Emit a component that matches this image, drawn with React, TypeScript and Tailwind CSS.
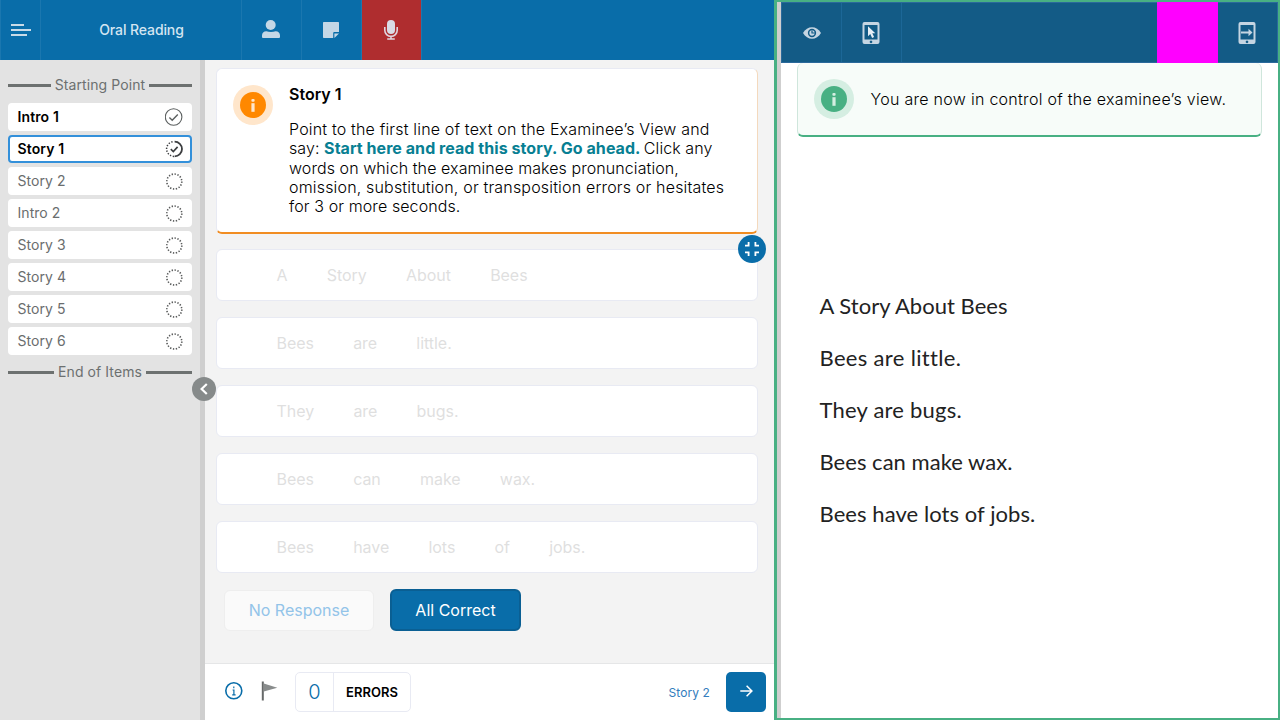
import React from "react";

const items = [
  { label: "Intro 1", state: "done" },
  { label: "Story 1", state: "active" },
  { label: "Story 2", state: "todo" },
  { label: "Intro 2", state: "todo" },
  { label: "Story 3", state: "todo" },
  { label: "Story 4", state: "todo" },
  { label: "Story 5", state: "todo" },
  { label: "Story 6", state: "todo" },
];

const rows = [
  ["A", "Story", "About", "Bees"],
  ["Bees", "are", "little."],
  ["They", "are", "bugs."],
  ["Bees", "can", "make", "wax."],
  ["Bees", "have", "lots", "of", "jobs."],
];

const story = [
  { text: "A Story About Bees", spacing: "tracking-[0.03px]" },
  { text: "Bees are little.", spacing: "tracking-[0.33px]" },
  { text: "They are bugs.", spacing: "tracking-[0.22px]" },
  { text: "Bees can make wax.", spacing: "tracking-[0.03px]" },
  { text: "Bees have lots of jobs.", spacing: "tracking-[0.07px]" },
];

function StateIcon({ state }: { state: string }) {
  if (state === "done") {
    return (
      <svg width="18" height="18" viewBox="0 0 18 18" fill="none" stroke="#5c6060">
        <circle cx="8.6" cy="9" r="8.3" strokeWidth="1.1" />
        <path d="M4.4 9.6 7.2 12.2 12.8 6.4" strokeWidth="1.4" />
      </svg>
    );
  }
  if (state === "active") {
    return (
      <svg width="18" height="18" viewBox="0 0 18 18" fill="none" stroke="#3c3e40">
        <path d="M9 16.4A7.4 7.4 0 0 1 9 1.6" strokeWidth="1.5" strokeDasharray="1.3 1.6" />
        <path d="M9.6 1.6A7.4 7.4 0 0 1 9.6 16.4" strokeWidth="1.8" />
        <path d="M5.8 9.2 8.3 11.6 12.6 6.9" strokeWidth="1.6" />
      </svg>
    );
  }
  return (
    <svg width="18" height="18" viewBox="0 0 18 18" fill="none" stroke="#5a5c5c">
      <circle cx="9.3" cy="9.5" r="7.5" strokeWidth="1.6" strokeDasharray="1.35 1.595" />
    </svg>
  );
}

function Info({ outer, inner, dot }: { outer: string; inner: string; dot: string }) {
  return (
    <svg className="shrink-0" width="40" height="40" viewBox="0 0 40 40">
      <circle cx="20" cy="20" r="20" fill={outer} />
      <circle cx="20" cy="20" r="13" fill={inner} />
      <rect x="18.4" y="14" width="3.2" height="2.8" rx="1" fill={dot} />
      <rect x="18.4" y="18.2" width="3.2" height="8.6" fill={dot} />
    </svg>
  );
}

function Rule({ text }: { text: string }) {
  return (
    <div className="flex h-5 items-center gap-1 text-[14px] tracking-[0.08px] text-[#6c7070]">
      <span className="h-[3px] flex-1 bg-[#6d7170]" />
      <span className="leading-5">{text}</span>
      <span className="h-[3px] flex-1 bg-[#6d7170]" />
    </div>
  );
}

function Tablet({ children }: { children: React.ReactNode }) {
  return (
    <svg width="18" height="22" viewBox="0 0 18 22">
      <path
        fill="#c5d5e2"
        fillRule="evenodd"
        d="M2.5 0h13A2 2 0 0 1 17.5 2v18a2 2 0 0 1-2 2h-13a2 2 0 0 1-2-2V2a2 2 0 0 1 2-2ZM2.5 3v14.4h13V3ZM9 18.6a1.3 1.3 0 1 0 .01 0Z"
      />
      {children}
    </svg>
  );
}

export default function App() {
  return (
    <div className="flex h-[720px] w-[1280px] overflow-hidden bg-[#f3f3f3] font-['Inter',sans-serif]">
      <div className="flex w-[774px] shrink-0 flex-col">
        <header className="flex h-[60px] shrink-0 bg-[#096da9]">
          <div className="flex w-[41px] items-center border-x border-[#1a77af] pl-[10px]">
            <svg width="20" height="12" viewBox="0 0 20 12" stroke="#c8dbe8" strokeWidth="1.8">
              <path d="M0 1h13M0 6h20M0 11h16" />
            </svg>
          </div>
          <div className="flex w-[201px] items-center justify-center border-r border-[#1a77af] text-[14px] font-medium tracking-[-0.1px] text-[#d4e5f1]">
            <span className="-mt-px pl-px">Oral Reading</span>
          </div>
          <div className="flex w-[60px] items-center justify-center border-r border-[#1a77af] pr-[2px]">
            <svg className="-mt-[2px]" width="18" height="18" viewBox="0 0 18 18" fill="#c4d7e6">
              <circle cx="8.7" cy="5" r="5" />
              <path d="M0 17v-1.5C0 12.8 1.6 11.2 4.4 11.2 7 12.3 11 12.3 13.6 11.2 16.4 11.2 18 12.8 18 15.5V17q0 1-1 1H1q-1 0-1-1Z" />
            </svg>
          </div>
          <div className="flex w-[60px] items-center justify-center border-r border-[#1a77af] pr-[2px]">
            <svg width="16" height="16" viewBox="0 0 16 16" fill="#c4d7e6">
              <path d="M.7 0h14.6q.7 0 .7.7V10h-4.8q-1 0-1 1v5H.7q-.7 0-.7-.7V.7Q0 0 .7 0Z" />
              <path d="M11.4 11.4H16L11.4 16Z" />
            </svg>
          </div>
          <div className="flex w-[60px] items-center justify-center border-r border-[#1a77af] bg-[#af2d2f] pr-[2px]">
            <svg width="14" height="20" viewBox="0 0 14 20" fill="none" stroke="#e0d5df" strokeWidth="1.6">
              <rect x="3" y="0" width="8" height="14" rx="4" fill="#d9dce6" stroke="none" />
              <path d="M.8 7v3.2a6.2 6.2 0 0 0 12.4 0V7M7 16v3M3.2 19h7.6" />
            </svg>
          </div>
        </header>
        <div className="flex min-h-0 flex-1">
          <aside className="relative w-[205px] shrink-0 border-r-[5px] border-[#cfcfcf] bg-[#e3e3e3] px-2 pt-[15px]">
            <Rule text="Starting Point" />
            <div className="mt-2 mb-[7px] flex flex-col gap-1">
              {items.map((it) => (
                <div
                  key={it.label}
                  className={
                    "flex h-7 items-center justify-between rounded-[4px] border-2 bg-white pr-[7px] pl-[7.5px] text-[14px] " +
                    (it.state === "active" ? "border-[#3390da] " : "border-white ") +
                    (it.state === "todo" ? "tracking-[0.05px] text-[#6a6d6e]" : "font-semibold tracking-[0.12px] text-black")
                  }
                >
                  <span className="pb-[2px]">{it.label}</span>
                  <StateIcon state={it.state} />
                </div>
              ))}
            </div>
            <Rule text="End of Items" />
            <button className="absolute top-[317px] left-[192px] z-10 flex h-6 w-6 items-center justify-center rounded-full bg-[#868a8a]">
              <svg width="8" height="12" viewBox="0 0 8 12" fill="none" stroke="white" strokeWidth="2.2">
                <path d="M6.8 1 1.6 6l5.2 5" />
              </svg>
            </button>
          </aside>
          <div className="flex min-w-0 flex-1 flex-col">
            <main className="relative min-h-0 flex-1 pt-2 pr-4 pl-[11px]">
              <section className="flex h-[166px] gap-4 rounded-[6px] border border-b-2 border-[#e8eaf3] border-r-[#f4d9bd] border-b-[#f18d22] bg-white pt-4 pl-4">
                <Info outer="#ffe6cb" inner="#ff8800" dot="#ffe6cb" />
                <div className="-mt-px text-[16px] leading-[19.3px] whitespace-nowrap text-black">
                  <h1 className="mb-4 leading-5 font-semibold">Story 1</h1>
                  <p className="font-light tracking-[0.175px]">
                    <span className="block">Point to the first line of text on the Examinee’s View and</span>
                    <span className="block tracking-[0.08px]">say: <b className="font-bold tracking-[0.05px] text-[#087f93]">Start here and read this story. Go ahead. </b>Click any</span>
                    <span className="block tracking-[0.08px]">words on which the examinee makes pronunciation,</span>
                    <span className="block">omission, substitution, or transposition errors or hesitates</span>
                    <span className="block tracking-[0.1px]">for 3 or more seconds.</span>
                  </p>
                </div>
              </section>
              <button className="absolute top-[175px] left-[533px] flex h-7 w-7 items-center justify-center rounded-full bg-[#096da9]">
                <svg width="14" height="14" viewBox="0 0 14 14" fill="none" stroke="white" strokeWidth="1.8">
                  <path d="M0 3.6h3.6V0M10.4 0v3.6H14M0 10.4h3.6V14M10.4 14v-3.6H14" />
                </svg>
              </button>
              <div className="mt-[15px] flex flex-col gap-4">
                {rows.map((words, i) => (
                  <div key={i} className="flex h-[52px] items-center gap-[39.2px] rounded-[6px] border border-[#e8eaf3] bg-white pl-[59.5px] text-[16px] tracking-[-0.03px] text-[#dfdfdf]">
                    {words.map((w, j) => (
                      <span key={j}>{w}</span>
                    ))}
                  </div>
                ))}
              </div>
              <div className="mt-4 flex items-center gap-4 pl-2">
                <button className="h-[41px] w-[150px] rounded-[6px] border border-[#eeeeee] bg-[#fafafa] text-[16px] text-[#93c4e9]">No Response</button>
                <button className="h-[42px] w-[131px] rounded-[6px] border-2 border-[#0a5f93] bg-[#096da9] text-[16px] text-white">All Correct</button>
              </div>
            </main>
            <footer className="flex h-[57px] shrink-0 items-center border-t border-[#e5e6e7] bg-white pr-2 pl-[20px]">
              <svg className="-mt-[3px]" width="18" height="18" viewBox="0 0 18 18" fill="none" stroke="#096da9">
                <circle cx="8.8" cy="8.8" r="8" strokeWidth="1.6" />
                <path d="M8.8 4.6v1.7M7.6 8h1.3v4.7M7.2 12.8h3.4" strokeWidth="1.2" />
              </svg>
              <svg className="-mt-[2px] ml-[18px]" width="17" height="20" viewBox="0 0 17 20">
                <path d="M.8 .5h2V19.5H.8Z" fill="#666969" />
                <path d="M2.8 2.5 16.3 6.8 2.8 10.5Z" fill="#898c8c" />
              </svg>
              <div className="ml-[17px] flex h-10 w-[116px] rounded-[5px] border border-[#e8eaf3]">
                <span className="flex w-[38px] items-center justify-center border-r border-[#e8eaf3] text-[20px] font-light text-[#096da9]">0</span>
                <span className="flex flex-1 items-center justify-center pt-[2px] text-[13px] font-semibold text-black">ERRORS</span>
              </div>
              <span className="ml-auto pt-[2px] text-[12px] tracking-[0.1px] text-[#337dbd]">Story 2</span>
              <button className="ml-4 flex h-10 w-10 items-center justify-center rounded-[5px] bg-[#096da9]">
                <svg className="-mt-[2px]" width="13" height="12" viewBox="0 0 13 12" fill="none" stroke="white" strokeWidth="1.5">
                  <path d="M.3 6h11.5M6.6.7 11.9 6l-5.3 5.3" />
                </svg>
              </button>
            </footer>
          </div>
        </div>
      </div>
      <div className="flex flex-1 border-[2px] border-r-[2px] border-l-[3px] border-[#48b083] bg-white">
        <div className="w-[4px] shrink-0 bg-[#cfcfcf]" />
        <div className="flex min-w-0 flex-1 flex-col">
          <header className="flex h-[61px] shrink-0 border border-[#2b699b] bg-[#135b86]">
            <div className="flex w-[60px] items-center justify-center border-r border-[#1c6797]">
              <svg width="18" height="12" viewBox="0 0 18 12">
                <path d="M0 6C4.2-1.7 13.8-1.7 18 6 13.8 13.7 4.2 13.7 0 6Z" fill="#c5d5e2" />
                <circle cx="9" cy="6" r="3.4" fill="none" stroke="#135b86" strokeWidth="1.5" />
                <path d="M9 3.5V6h2.8" fill="none" stroke="#135b86" strokeWidth="1.2" />
              </svg>
            </div>
            <div className="flex w-[60px] items-center justify-center border-r border-[#1c6797] pr-px">
              <Tablet>
                <path d="M6 4.2v10l2.3-2.1 1.8 3.8 2-1-1.8-3.6h3Z" fill="#e7eef5" />
              </Tablet>
            </div>
            <div className="-my-px ml-auto w-[61px] bg-[#ff00ff]" />
            <div className="flex w-[59px] items-center justify-center pr-[2px]">
              <Tablet>
                <path d="M3 9.6h7.5V6.7l4 3.8-4 3.8v-2.9H3Z" fill="#c5d5e2" />
              </Tablet>
            </div>
          </header>
          <section className="mr-4 ml-4 flex h-[74px] shrink-0 items-center gap-4 rounded-[6px] border border-t-0 border-b-2 border-[#cfe6dc] border-b-[#48b083] bg-[#f7fcf9] pb-px pl-4">
            <Info outer="#d5eee2" inner="#48b083" dot="#d5eee2" />
            <span className="pl-[0.5px] text-[16px] leading-5 font-light tracking-[0.28px] whitespace-nowrap text-black">You are now in control of the examinee’s view.</span>
          </section>
          <div className="mt-[143px] pl-[38.5px] font-['Lato',sans-serif] text-[22px] leading-[52px] whitespace-nowrap text-[#222] [font-variant-ligatures:none]">
            {story.map((line) => (
              <p key={line.text} className={line.spacing}>{line.text}</p>
            ))}
          </div>
        </div>
      </div>
    </div>
  );
}
